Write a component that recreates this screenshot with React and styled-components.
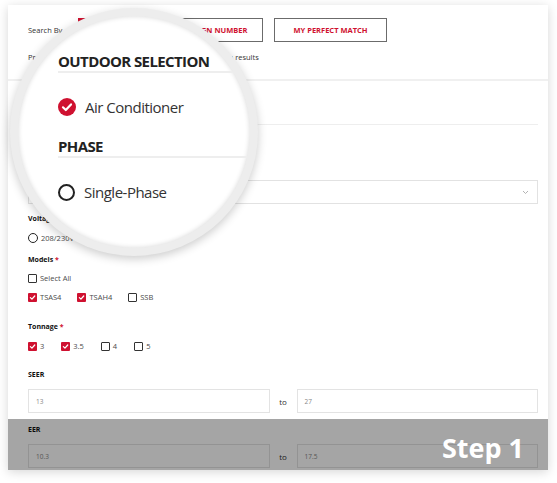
import styled, { createGlobalStyle } from "styled-components";

const RED = "#cf1130";
const FONT = `"Open Sans", "Liberation Sans", sans-serif`;

const GlobalStyle = createGlobalStyle`
  html, body {
    margin: 0;
    background: #fff;
  }
  body {
    font-family: ${FONT};
  }
`;

const Page = styled.div`
  position: relative;
  width: 557px;
  height: 483px;
  overflow: hidden;
  padding: 5px 9px 0 8px;
  box-sizing: border-box;
`;

const Card = styled.section`
  position: relative;
  height: 465px;
  background: #fff;
  box-shadow: 0 2px 10px rgba(0, 0, 0, 0.16);
  overflow: hidden;
`;

const Header = styled.header`
  padding: 13px 10px 16px 20px;
  border-bottom: 2px solid #f0f0f0;
`;

const SearchRow = styled.div`
  display: flex;
  align-items: center;
  height: 24px;
`;

const SmallText = styled.div`
  width: ${(p) => (p.$w ? `${p.$w}px` : "auto")};
  margin-top: ${(p) => p.$mt || 0}px;
  font-size: 7.5px;
  line-height: 12px;
  color: #333;
  white-space: nowrap;
`;

const TabButton = styled.button`
  height: 24px;
  width: ${(p) => p.$w}px;
  margin-left: ${(p) => (p.$first ? 0 : 11)}px;
  padding: 0;
  border: 1.5px solid ${(p) => (p.$active ? RED : "#6b6b6b")};
  background: ${(p) => (p.$active ? RED : "#fff")};
  color: ${(p) => (p.$active ? "#fff" : RED)};
  font: 700 7.5px ${FONT};
  text-transform: uppercase;
`;

const Body = styled.div`
  display: flex;
  flex-direction: column;
  padding: 0 10px 0 20px;
`;

const SectionTitle = styled.h2`
  margin: 0;
  height: 44px;
  box-sizing: border-box;
  padding-bottom: 8px;
  display: flex;
  align-items: flex-end;
  border-bottom: 1.5px solid #eeeeee;
  font: 700 9px ${FONT};
  text-transform: uppercase;
  color: #222;
`;

const FieldLabel = styled.div`
  margin-top: ${(p) => p.$mt}px;
  font: 700 7px/12px ${FONT};
  color: #111;
`;

const Req = styled.span`
  color: ${RED};
`;

const OptionRow = styled.div`
  margin-top: ${(p) => p.$mt}px;
  height: 12px;
  display: flex;
  align-items: center;
  gap: ${(p) => p.$gap || 16}px;
`;

const Option = styled.label`
  display: flex;
  align-items: center;
  gap: 3px;
  font: 400 7.5px ${FONT};
  color: #4a4a4a;
  white-space: nowrap;
`;

const Box = styled.span`
  width: 9px;
  height: 9px;
  box-sizing: border-box;
  border-radius: 1px;
  border: ${(p) => (p.$checked ? "none" : "1.3px solid #333")};
  background: ${(p) => (p.$checked ? RED : "#fff")};
  display: flex;
  align-items: center;
  justify-content: center;
`;

const Radio = styled.span`
  width: 10px;
  height: 10px;
  box-sizing: border-box;
  border-radius: 50%;
  border: 1.3px solid #222;
`;

const SelectBox = styled.div`
  margin-top: ${(p) => p.$mt}px;
  height: 24px;
  box-sizing: border-box;
  border: 1.5px solid #e2e2e2;
  display: flex;
  align-items: center;
  justify-content: space-between;
  padding: 0 8px;
  font: 400 7px ${FONT};
  color: #777;
`;

const RangeRow = styled.div`
  margin-top: ${(p) => p.$mt}px;
  display: grid;
  grid-template-columns: 1fr 27px 1fr;
  align-items: center;
`;

const Input = styled.div`
  height: 24px;
  box-sizing: border-box;
  border: 1.5px solid #e3e3e3;
  padding-left: 7px;
  display: flex;
  align-items: center;
  font: 400 6.5px ${FONT};
  color: #888;
`;

const To = styled.span`
  text-align: center;
  font: 400 8px ${FONT};
  color: #333;
`;

const StepOverlay = styled.div`
  position: absolute;
  left: 0;
  right: 0;
  bottom: 0;
  height: 51px;
  background: rgba(0, 0, 0, 0.353);
  display: flex;
  align-items: center;
  justify-content: flex-end;
  padding: 5px 24px 0 0;
  box-sizing: border-box;
  font: 700 27px ${FONT};
  color: #fff;
`;

const Lens = styled.div`
  position: absolute;
  left: 10px;
  top: 8px;
  width: 248px;
  height: 248px;
  padding: 8px;
  box-sizing: border-box;
  border-radius: 50%;
  background: #ededed;
  box-shadow: 0 3px 10px rgba(0, 0, 0, 0.2);
`;

const LensView = styled.div`
  width: 100%;
  height: 100%;
  box-sizing: border-box;
  padding: 35px 0 0 40px;
  border-radius: 50%;
  overflow: hidden;
  background: #fff;
  box-shadow: inset 0 0 5px rgba(0, 0, 0, 0.16);
`;

const LensHeading = styled.div`
  margin-top: ${(p) => p.$mt}px;
  width: 300px;
  font: 700 15px/20px ${FONT};
  letter-spacing: -0.6px;
  color: #222;
  border-bottom: 2px solid #eeeeee;
`;

const LensOption = styled.div`
  margin-top: 24px;
  height: 20px;
  display: flex;
  align-items: center;
  gap: 9px;
  font: 400 15px ${FONT};
  letter-spacing: -0.5px;
  color: #333;
`;

const LensRadio = styled.span`
  width: 17px;
  height: 17px;
  box-sizing: border-box;
  border-radius: 50%;
  border: 2px solid #222;
`;

const Tick = ({ size = 7 }) => (
  <svg width={size} height={size} viewBox="0 0 10 10">
    <polyline
      points="2,5.2 4.2,7.3 8.2,2.8"
      fill="none"
      stroke="#fff"
      strokeWidth="1.8"
      strokeLinecap="round"
      strokeLinejoin="round"
    />
  </svg>
);

const CheckCircle = () => (
  <svg width="18" height="18" viewBox="0 0 18 18">
    <circle cx="9" cy="9" r="9" fill={RED} />
    <polyline
      points="5,9.3 7.8,12 13,6.4"
      fill="none"
      stroke="#fff"
      strokeWidth="2.2"
      strokeLinecap="round"
      strokeLinejoin="round"
    />
  </svg>
);

const Chevron = () => (
  <svg width="7" height="5" viewBox="0 0 7 5">
    <polyline points="1,1 3.5,3.5 6,1" fill="none" stroke="#aaa" strokeWidth="0.9" />
  </svg>
);

const Check = ({ checked, children }) => (
  <Option>
    <Box $checked={checked}>{checked && <Tick />}</Box>
    {children}
  </Option>
);

const App = () => {
  return (
    <Page>
      <GlobalStyle />
      <Card>
        <Header>
          <SearchRow>
            <SmallText $w={50}>Search By</SmallText>
            <TabButton $first $active $w={80}>Filters</TabButton>
            <TabButton $w={94}>Design Number</TabButton>
            <TabButton $w={113}>My Perfect Match</TabButton>
          </SearchRow>
          <SmallText $mt={9}>
            Provide the details below to narrow down the list of search results
          </SmallText>
        </Header>

        <Body>
          <SectionTitle>Outdoor Selection</SectionTitle>
          <OptionRow $mt={16}>
            <Option>
              <Radio />
              Air Conditioner
            </Option>
          </OptionRow>
          <FieldLabel $mt={10}>
            Phase <Req>*</Req>
          </FieldLabel>
          <SelectBox $mt={5}>
            Single-Phase
            <Chevron />
          </SelectBox>

          <FieldLabel $mt={9}>Voltage</FieldLabel>
          <OptionRow $mt={7} $gap={40}>
            <Option>
              <Radio />
              208/230V 1 Ph
            </Option>
            <Option>
              <Radio />
              460V 3 Ph
            </Option>
          </OptionRow>

          <FieldLabel $mt={10}>
            Models <Req>*</Req>
          </FieldLabel>
          <OptionRow $mt={6}>
            <Check>Select All</Check>
          </OptionRow>
          <OptionRow $mt={7}>
            <Check checked>TSAS4</Check>
            <Check checked>TSAH4</Check>
            <Check>SSB</Check>
          </OptionRow>

          <FieldLabel $mt={18}>
            Tonnage <Req>*</Req>
          </FieldLabel>
          <OptionRow $mt={7} $gap={17}>
            <Check checked>3</Check>
            <Check checked>3.5</Check>
            <Check>4</Check>
            <Check>5</Check>
          </OptionRow>

          <FieldLabel $mt={17}>SEER</FieldLabel>
          <RangeRow $mt={8}>
            <Input>13</Input>
            <To>to</To>
            <Input>27</Input>
          </RangeRow>

          <FieldLabel $mt={11}>EER</FieldLabel>
          <RangeRow $mt={8}>
            <Input>10.3</Input>
            <To>to</To>
            <Input>17.5</Input>
          </RangeRow>
        </Body>

        <StepOverlay>Step 1</StepOverlay>
      </Card>

      <Lens>
        <LensView>
          <LensHeading>OUTDOOR SELECTION</LensHeading>
          <LensOption>
            <CheckCircle />
            Air Conditioner
          </LensOption>
          <LensHeading $mt={19}>PHASE</LensHeading>
          <LensOption>
            <LensRadio />
            Single-Phase
          </LensOption>
        </LensView>
      </Lens>
    </Page>
  );
};

export default App;
